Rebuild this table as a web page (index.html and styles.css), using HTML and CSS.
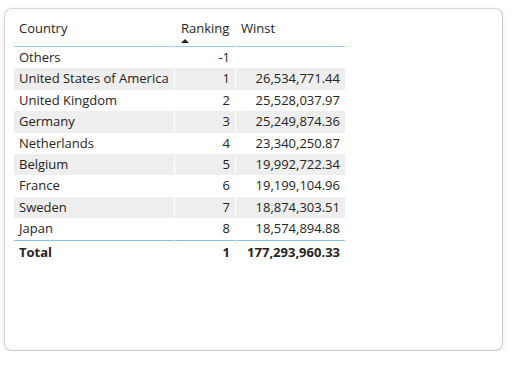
FILE: index.html
```html
<!DOCTYPE html>
<html>
<head>
<meta charset="utf-8">
<link rel="stylesheet" href="styles.css">
</head>
<body>
<div class="card">
  <div class="table">
    <div class="cell head">Country</div>
    <div class="cell head num">Ranking<span class="sort"></span></div>
    <div class="cell head">Winst</div>

    <div class="cell">Others</div><div class="cell num">-1</div><div class="cell num"></div>
    <div class="cell alt">United States of America</div><div class="cell alt num">1</div><div class="cell alt num">26,534,771.44</div>
    <div class="cell">United Kingdom</div><div class="cell num">2</div><div class="cell num">25,528,037.97</div>
    <div class="cell alt">Germany</div><div class="cell alt num">3</div><div class="cell alt num">25,249,874.36</div>
    <div class="cell">Netherlands</div><div class="cell num">4</div><div class="cell num">23,340,250.87</div>
    <div class="cell alt">Belgium</div><div class="cell alt num">5</div><div class="cell alt num">19,992,722.34</div>
    <div class="cell">France</div><div class="cell num">6</div><div class="cell num">19,199,104.96</div>
    <div class="cell alt">Sweden</div><div class="cell alt num">7</div><div class="cell alt num">18,874,303.51</div>
    <div class="cell">Japan</div><div class="cell num">8</div><div class="cell num">18,574,894.88</div>

    <div class="cell total">Total</div><div class="cell total num">1</div><div class="cell total num">177,293,960.33</div>
  </div>
</div>
</body>
</html>
```
FILE: styles.css
```css
html, body {
  margin: 0;
  padding: 0;
  background: #ffffff;
}
body {
  font-family: "Open Sans", "Noto Sans", sans-serif;
  font-size: 13px;
  color: #252423;
}
.card {
  margin: 8px 0 0 4px;
  width: 499px;
  height: 343px;
  border: 1px solid #d4d4d4;
  border-right-color: #cacaca;
  border-bottom-color: #c8c8c8;
  border-radius: 8px;
  box-shadow: 0 3px 10px rgba(0, 0, 0, 0.08);
  background: #fff;
  padding: 5px 0 0 9px;
  box-sizing: border-box;
}
.table {
  display: grid;
  grid-template-columns: 160px 60px 109px;
  column-gap: 1px;
  width: 331px;
}
.cell {
  height: 21.4px;
  line-height: 21.4px;
  padding: 0 5px;
  white-space: nowrap;
  overflow: hidden;
  box-sizing: border-box;
}
.num {
  text-align: right;
  padding-right: 5px;
}
.alt {
  background: #eeeeee;
}
.head {
  height: 33px;
  line-height: 28px;
  border-bottom: 1px solid #9ccbf4;
  position: relative;
  text-align: left;
}
.head.num {
  padding-left: 6px;
}
.sort {
  position: absolute;
  left: 6px;
  top: 25px;
  width: 0;
  height: 0;
  border-left: 4px solid transparent;
  border-right: 4px solid transparent;
  border-bottom: 4px solid #252423;
}
.total {
  font-weight: 700;
  border-top: 1px solid #88c0f0;
  height: 22px;
  line-height: 22px;
}
```
